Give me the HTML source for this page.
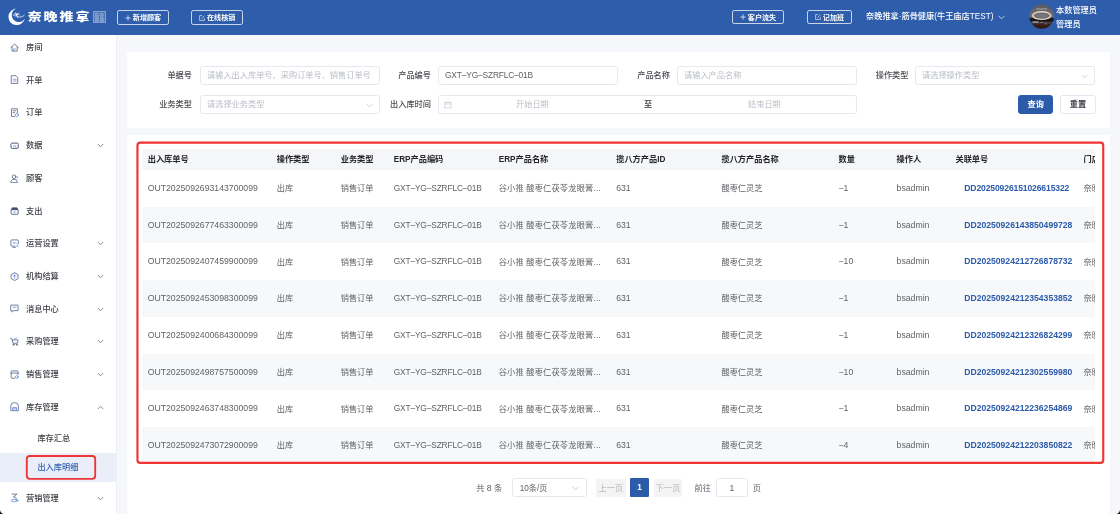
<!DOCTYPE html>
<html lang="zh-CN">
<head>
<meta charset="utf-8">
<title>出入库明细</title>
<style>
*{box-sizing:border-box;margin:0;padding:0}
html,body{width:1120px;height:514px;overflow:hidden;background:#f6f7fa}
body{position:relative;font-family:"Liberation Sans","Noto Sans CJK SC",sans-serif;font-size:8.2px;color:#606266;-webkit-font-smoothing:antialiased}
#app{position:absolute;left:0;top:0;width:1120px;height:514px;will-change:transform}
.abs{position:absolute}
/* header */
#hd{position:absolute;left:0;top:0;width:1120px;height:35px;background:#2d5dab;color:#fff}
.logo-t{position:absolute;left:27.7px;top:7.3px;font-size:14px;line-height:20px;font-weight:900;letter-spacing:1.9px;white-space:nowrap;transform:scaleY(.84);transform-origin:0 50%}
.seal{position:absolute;left:93px;top:11px;width:13px;height:12px;background:rgba(255,255,255,.17);border:.6px solid rgba(255,255,255,.3);font-size:4.6px;line-height:5.2px;color:rgba(255,255,255,.5);text-align:center;padding-top:.5px;overflow:hidden;letter-spacing:.5px}
.hbtn{position:absolute;top:10px;height:14.6px;border:1px solid rgba(255,255,255,.74);border-radius:2.2px;font-size:7.1px;line-height:14.4px;font-weight:700;text-align:center;white-space:nowrap;color:#fff}
.hbtn svg{display:inline-block;vertical-align:-0.8px;margin-right:2px}
.shop{position:absolute;left:866px;top:10px;font-size:8.2px;line-height:14px;white-space:nowrap;font-weight:500}
.uname{position:absolute;left:1056px;font-size:8.2px;line-height:11px;font-weight:500;white-space:nowrap}
/* sidebar */
#sb{position:absolute;left:0;top:35px;width:117px;height:479px;background:#fff;border-right:1px solid #eceef4}
.mi{position:absolute;left:0;width:116px;height:20px;color:#3d4046;font-weight:500;font-size:8.2px;line-height:20px;white-space:nowrap}
.mi .ic{position:absolute;left:10px;top:5.4px;width:9.2px;height:9.2px}
.mi .tx{position:absolute;left:26px;top:.7px}
.mi .ar{position:absolute;left:96.5px;top:7.5px;width:7px;height:5px}
.sub{position:absolute;left:37.4px;font-size:8.2px;line-height:22.4px;color:#3d4046;font-weight:500;white-space:nowrap}
/* cards */
.card{position:absolute;background:#fff}
.lbl{position:absolute;width:70px;text-align:right;font-size:8.2px;line-height:19px;color:#4a4d52;font-weight:500;white-space:nowrap}
.inp{position:absolute;height:19px;border:1px solid #e5e8f0;border-radius:2.5px;background:#fff;font-size:8.2px;line-height:17px;color:#b9bdc6;padding-left:6px;white-space:nowrap;overflow:hidden}
.inp.val{color:#606266}
.btn{position:absolute;top:95px;height:19px;border-radius:2.8px;font-size:8.2px;line-height:17px;text-align:center;font-weight:700}
/* table */
#tb{position:absolute;left:141.7px;top:148.8px;width:953.2px;height:314px;overflow:hidden}
.tr{position:absolute;left:0;width:953.2px;height:36.8px;line-height:37.9px;color:#606266;font-size:8.2px;white-space:nowrap}
.tr.h{top:0;height:21px;line-height:21px;background:#f5f6fa;color:#262626;font-weight:700}
.tr.s{background:#f7f8fa}
.tr span{position:absolute;top:.4px}
.tr span.en,.tr span.gx{top:0}
.tr.h span{top:.3px}
.en{font-size:8.7px}
.nm{letter-spacing:.2px}
.gx{font-size:8.4px !important;letter-spacing:-.16px}
.tr .lk.en{font-size:8.6px}
.tr .lk{color:#2c5baa;font-weight:700}
.c1{left:6px}.c2{left:135px}.c3{left:199px}.c4{left:252px}.c5{left:357px}.c6{left:474.5px}.c7{left:579.8px}.c8{left:696.8px}.c9{left:754.9px}.c10{left:813.8px}.c10.lk{left:822.6px}.c11{left:941.8px}
/* pagination */
.pg{position:absolute;top:478.3px;height:18.8px;line-height:21.6px;font-size:8.2px;color:#606266;white-space:nowrap}
.pb{top:479.1px;height:17.7px;line-height:19.8px;background:#f4f4f5;color:#b3b7be;text-align:center;border-radius:1.2px}
</style>
</head>
<body>
<div id="app">
<div id="hd">
<svg class="abs" style="left:8px;top:8px" width="18" height="18" viewBox="0 0 18 18"><path d="M8.5 .5A8.3 8.3 0 1 0 16.9 10.5A7 7 0 1 1 8.5 .5Z" fill="#fff"/><path d="M5.2 6.9Q8 7 9.6 8.3T13 8.9Q15 8.6 16.2 7.3M7.8 4.7L9.6 9.6M10.4 4.9L7.9 8.3M6.6 5.8L11.2 6.6" stroke="#fff" stroke-width=".8" fill="none" stroke-linecap="round" opacity=".92"/></svg>
<div class="logo-t">奈晚推拿</div>
<div class="seal">筋骨<br>健康</div>
<div class="hbtn" style="left:117px;width:52px"><svg width="6" height="6" viewBox="0 0 6 6"><path d="M3 .4v5.2M.4 3h5.2" stroke="#fff" stroke-width=".7"/></svg>新增顾客</div>
<div class="hbtn" style="left:191px;width:52.4px"><svg width="6" height="6" viewBox="0 0 6 6"><path d="M3 .6H.6v4.8h4.8V3M2.6 3.6L5.4.6" stroke="#fff" stroke-width=".6" fill="none"/></svg>在线核销</div>
<div class="hbtn" style="left:732px;width:52px;top:9.5px"><svg width="6" height="6" viewBox="0 0 6 6"><path d="M3 .4v5.2M.4 3h5.2" stroke="#fff" stroke-width=".7"/></svg>客户流失</div>
<div class="hbtn" style="left:807px;width:45px;top:9.5px"><svg width="6" height="6" viewBox="0 0 6 6"><path d="M3 .6H.6v4.8h4.8V3M2.6 3.6L5.4.6" stroke="#fff" stroke-width=".6" fill="none"/></svg>记加班</div>
<div class="shop">奈晚推拿·筋骨健康(牛王庙店TEST)</div>
<svg class="abs" style="left:998px;top:15px" width="7" height="5" viewBox="0 0 7 5"><path d="M.6.8L3.5 3.8 6.4.8" stroke="#dfe6f3" stroke-width=".8" fill="none"/></svg>
<svg class="abs" style="left:1029px;top:3.5px" width="26" height="26" viewBox="0 0 26 26"><defs><clipPath id="av"><circle cx="12.7" cy="12.55" r="12.2"/></clipPath><linearGradient id="avg" x1="0" y1="0" x2="0" y2="1"><stop offset="0" stop-color="#58585c"/><stop offset=".5" stop-color="#737378"/><stop offset=".56" stop-color="#1b1a1d"/><stop offset=".66" stop-color="#26242a"/><stop offset=".72" stop-color="#4a4140"/><stop offset=".8" stop-color="#3a2118"/><stop offset="1" stop-color="#2a120b"/></linearGradient></defs><g clip-path="url(#av)"><rect width="26" height="26" fill="url(#avg)"/><ellipse cx="12.7" cy="11.6" rx="8.9" ry="3.9" fill="#6b6b73" stroke="#ecd8c2" stroke-width="1.5"/><ellipse cx="12.7" cy="11.9" rx="6.2" ry="1.9" fill="#75757d"/><path d="M0 14.2Q12.7 17.6 26 14.2V17.4H0Z" fill="#17161a"/><rect x="3.4" y="17.3" width="6.2" height="1.5" fill="#aab0bd" opacity=".85"/><rect x="11" y="17.8" width="3.4" height="1" fill="#8c8f99" opacity=".7"/><rect x="16.4" y="18.6" width="1" height="1.8" fill="#b9b9c0" opacity=".7"/><rect x="7.2" y="4.1" width="11" height="1.7" fill="#c9c9cf" opacity=".38"/></g></svg>
<div class="uname" style="top:4.9px">本数管理员</div>
<div class="uname" style="top:19px">管理员</div>
</div>
<div id="sb">
<div class="abs" style="left:0;top:417.7px;width:116px;height:29px;background:#e9eef8"></div>
<div class="mi" style="top:2.4px"><svg class="ic" viewBox="0 0 10 10"><path d="M1 5L5 1.2 9 5M2.2 4.2V8.8H7.8V4.2" stroke="#45547f" stroke-width=".8" fill="none" stroke-linejoin="round" stroke-linecap="round"/><path d="M4 8.6V6.4H6" stroke="#5b86d6" stroke-width=".8" fill="none" stroke-linecap="round"/></svg><span class="tx">房间</span></div>
<div class="mi" style="top:35.1px"><svg class="ic" viewBox="0 0 10 10"><path d="M1.8 .8H6.4L8.4 2.8V9.2H1.8Z" stroke="#45547f" stroke-width=".8" fill="none" stroke-linejoin="round" stroke-linecap="round"/><path d="M3.6 4.6H6.6M3.6 6.6H6.6" stroke="#5b86d6" stroke-width=".8" fill="none" stroke-linecap="round"/></svg><span class="tx">开单</span></div>
<div class="mi" style="top:67.7px"><svg class="ic" viewBox="0 0 10 10"><path d="M8 5V.8H1.6V9.2H5" stroke="#45547f" stroke-width=".8" fill="none" stroke-linejoin="round" stroke-linecap="round"/><path d="M3.4 3H6.2M3.4 5H5" stroke="#45547f" stroke-width=".8" fill="none" stroke-linejoin="round" stroke-linecap="round"/><circle cx="7.4" cy="7.6" r="1.7" stroke="#5b86d6" stroke-width=".8" fill="none" stroke-linecap="round"/></svg><span class="tx">订单</span></div>
<div class="mi" style="top:100.4px"><svg class="ic" viewBox="0 0 10 10"><rect x="1.1" y="2.3" width="7.9" height="5.7" rx="1.3" stroke="#3f4d78" stroke-width="1" fill="none"/><path d="M3.8 6.2L5 4.6 6.2 6.2" stroke="#5b86d6" stroke-width=".8" fill="none" stroke-linecap="round"/></svg><span class="tx">数据</span><svg class="ar" viewBox="0 0 7 5"><path d="M.8 1L3.5 3.8 6.2 1" stroke="#7a7f89" stroke-width=".9" fill="none"/></svg></div>
<div class="mi" style="top:133.2px"><svg class="ic" viewBox="0 0 10 10"><circle cx="4.4" cy="3" r="2" stroke="#45547f" stroke-width=".8" fill="none" stroke-linejoin="round" stroke-linecap="round"/><path d="M.9 9C.9 6.8 2.4 5.8 4.4 5.8S7.9 6.8 7.9 9Z" stroke="#45547f" stroke-width=".8" fill="none" stroke-linejoin="round" stroke-linecap="round"/><path d="M7.4 2.2C8.6 3 8.6 4.6 7.6 5.2" stroke="#5b86d6" stroke-width=".8" fill="none" stroke-linecap="round"/></svg><span class="tx">顾客</span></div>
<div class="mi" style="top:165.9px"><svg class="ic" viewBox="0 0 10 10"><path d="M1.2 4H8.8V8A1 1 0 0 1 7.8 9H2.2A1 1 0 0 1 1.2 8Z" stroke="#3f4d78" stroke-width=".9" fill="none"/><path d="M1.6 3.8L2.4 2H7.6L8.4 3.8Z" fill="#3f4d78" stroke="#3f4d78" stroke-width=".8" stroke-linejoin="round"/><path d="M4 6.5H6" stroke="#5b86d6" stroke-width="1.1" fill="none"/></svg><span class="tx">支出</span></div>
<div class="mi" style="top:198.5px"><svg class="ic" viewBox="0 0 10 10"><path d="M9 5.2V1.8A.8.8 0 0 0 8.2 1H1.8A.8.8 0 0 0 1 1.8V7A.8.8 0 0 0 1.8 7.8H5.4M3.2 9.4H6" stroke="#45547f" stroke-width=".8" fill="none" stroke-linejoin="round" stroke-linecap="round"/><path d="M3.4 3.4L4.4 5 5.6 3.6 6.8 4.8M7.4 6.6L8.8 8M8.8 6.6L7.4 8" stroke="#5b86d6" stroke-width=".8" fill="none" stroke-linecap="round"/></svg><span class="tx">运营设置</span><svg class="ar" viewBox="0 0 7 5"><path d="M.8 1L3.5 3.8 6.2 1" stroke="#7a7f89" stroke-width=".9" fill="none"/></svg></div>
<div class="mi" style="top:231.2px"><svg class="ic" viewBox="0 0 10 10"><path d="M5 .8L8.8 2.8V7.2L5 9.2 1.2 7.2V2.8Z" stroke="#45547f" stroke-width=".8" fill="none" stroke-linejoin="round" stroke-linecap="round" stroke-dasharray="1.6 .8"/><path d="M5 3.2V6.8M3.6 4.6L5 3.2 6.4 4.6" stroke="#5b86d6" stroke-width=".8" fill="none" stroke-linecap="round"/></svg><span class="tx">机构结算</span><svg class="ar" viewBox="0 0 7 5"><path d="M.8 1L3.5 3.8 6.2 1" stroke="#7a7f89" stroke-width=".9" fill="none"/></svg></div>
<div class="mi" style="top:264.0px"><svg class="ic" viewBox="0 0 10 10"><path d="M1.2 1.2H8.8V7.2H4L2.2 8.8V7.2H1.2Z" stroke="#45547f" stroke-width=".8" fill="none" stroke-linejoin="round" stroke-linecap="round"/><path d="M3.4 3.6H6.6" stroke="#5b86d6" stroke-width=".8" fill="none" stroke-linecap="round"/></svg><span class="tx">消息中心</span><svg class="ar" viewBox="0 0 7 5"><path d="M.8 1L3.5 3.8 6.2 1" stroke="#7a7f89" stroke-width=".9" fill="none"/></svg></div>
<div class="mi" style="top:296.8px"><svg class="ic" viewBox="0 0 10 10"><path d="M.8 1.6H2L3.2 6.8H8L8.8 3.2H2.8" stroke="#45547f" stroke-width=".8" fill="none" stroke-linejoin="round" stroke-linecap="round"/><circle cx="3.8" cy="8.4" r=".6" stroke="#45547f" stroke-width=".8" fill="none" stroke-linejoin="round" stroke-linecap="round"/><circle cx="7.4" cy="8.4" r=".6" stroke="#45547f" stroke-width=".8" fill="none" stroke-linejoin="round" stroke-linecap="round"/><path d="M5 1.2L5.8 2.4 7.2 .8" stroke="#5b86d6" stroke-width=".8" fill="none" stroke-linecap="round"/></svg><span class="tx">采购管理</span><svg class="ar" viewBox="0 0 7 5"><path d="M.8 1L3.5 3.8 6.2 1" stroke="#7a7f89" stroke-width=".9" fill="none"/></svg></div>
<div class="mi" style="top:329.4px"><svg class="ic" viewBox="0 0 10 10"><path d="M8.8 5V1.8A.8.8 0 0 0 8 1H2A.8.8 0 0 0 1.2 1.8V8.2A.8.8 0 0 0 2 9H5M1.2 3.4H8.8" stroke="#45547f" stroke-width=".8" fill="none" stroke-linejoin="round" stroke-linecap="round"/><circle cx="7.4" cy="7.6" r="1.5" stroke="#5b86d6" stroke-width=".8" fill="none" stroke-linecap="round"/></svg><span class="tx">销售管理</span><svg class="ar" viewBox="0 0 7 5"><path d="M.8 1L3.5 3.8 6.2 1" stroke="#7a7f89" stroke-width=".9" fill="none"/></svg></div>
<div class="mi" style="top:362.1px"><svg class="ic" viewBox="0 0 10 10"><path d="M.9 9V4.2A4.1 3.6 0 0 1 9.1 4.2V9Z" stroke="#45547f" stroke-width=".8" fill="none" stroke-linejoin="round" stroke-linecap="round"/><path d="M3 8.8V6H7V8.8M3 7.4H7" stroke="#5b86d6" stroke-width=".8" fill="none" stroke-linecap="round"/></svg><span class="tx">库存管理</span><svg class="ar" viewBox="0 0 7 5"><path d="M.8 4L3.5 1.2 6.2 4" stroke="#7a7f89" stroke-width=".9" fill="none"/></svg></div>
<div class="mi" style="top:453.0px"><svg class="ic" viewBox="0 0 10 10"><path d="M2.2 1.2H7.6L3.6 4.2Q6.8 4.2 6.8 6.2V8" stroke="#45547f" stroke-width=".8" fill="none" stroke-linejoin="round" stroke-linecap="round"/><ellipse cx="5" cy="8.2" rx="3.9" ry="1.3" stroke="#5b86d6" stroke-width=".8" fill="none" stroke-linecap="round"/></svg><span class="tx">营销管理</span><svg class="ar" viewBox="0 0 7 5"><path d="M.8 1L3.5 3.8 6.2 1" stroke="#7a7f89" stroke-width=".9" fill="none"/></svg></div>
<div class="sub" style="top:392.6px">库存汇总</div>
<div class="sub" style="top:422.3px;color:#3564b3">出入库明细</div>
</div>
<div class="card" id="flt" style="left:127px;top:52px;width:982.6px;height:76px">
<div class="lbl" style="left:-5.0px;top:14.0px">单据号</div>
<div class="inp" style="left:73.0px;top:14.0px;width:180px">请输入出入库单号、采购订单号、销售订单号</div>
<div class="lbl" style="left:234.0px;top:14.0px">产品编号</div>
<div class="inp val gx" style="left:311px;top:14.0px;width:180px">GXT–YG–SZRFLC–01B</div>
<div class="lbl" style="left:473.0px;top:14.0px">产品名称</div>
<div class="inp" style="left:550.0px;top:14.0px;width:180px">请输入产品名称</div>
<div class="lbl" style="left:711.5px;top:14.0px">操作类型</div>
<div class="inp" style="left:788px;top:14.0px;width:180px">请选择操作类型<svg class="abs" style="right:6.5px;top:6.5px" width="7" height="5" viewBox="0 0 7 5"><path d="M.6.9L3.5 3.9 6.4.9" stroke="#c0c4cc" stroke-width=".75" fill="none"/></svg></div>
<div class="lbl" style="left:-5.0px;top:43.0px">业务类型</div>
<div class="inp" style="left:73.0px;top:43.0px;width:180px">请选择业务类型<svg class="abs" style="right:6.5px;top:6.5px" width="7" height="5" viewBox="0 0 7 5"><path d="M.6.9L3.5 3.9 6.4.9" stroke="#c0c4cc" stroke-width=".75" fill="none"/></svg></div>
<div class="lbl" style="left:234.0px;top:43.0px">出入库时间</div>
<div class="inp" style="left:311px;top:43.0px;width:419px;padding:0"><svg class="abs" style="left:5px;top:5.2px" width="8" height="8" viewBox="0 0 8 8"><path d="M.7 1.5H7.1V6.9H.7ZM.7 3H7.1M2.4.6V2M5.4.6V2" stroke="#c6c9d0" stroke-width=".7" fill="none"/></svg><span class="abs" style="left:77px;top:0">开始日期</span><span class="abs" style="left:205px;top:0;color:#303133;font-weight:500">至</span><span class="abs" style="left:309px;top:0">结束日期</span></div>
<div class="btn" style="left:891px;top:43.3px;width:35.3px;background:#2c5baa;color:#fff;border:1px solid #2c5baa">查询</div>
<div class="btn" style="left:933.2px;top:43.3px;width:35.7px;background:#fff;color:#3f4247;border:1px solid #e3e7f1">重置</div>
</div>
<div class="card" id="tc" style="left:127px;top:134.5px;width:982.6px;height:380px"></div>
<div id="tb">
<div class="tr h"><span class="c1">出入库单号</span><span class="c2">操作类型</span><span class="c3">业务类型</span><span class="c4">ERP产品编码</span><span class="c5">ERP产品名称</span><span class="c6">揽八方产品ID</span><span class="c7">揽八方产品名称</span><span class="c8">数量</span><span class="c9">操作人</span><span class="c10">关联单号</span><span class="c11">门店</span></div>
<div class="tr" style="top:21.00px"><span class="c1 en">OUT2025092693143700099</span><span class="c2">出库</span><span class="c3">销售订单</span><span class="c4 gx">GXT–YG–SZRFLC–01B</span><span class="c5 nm">谷小推 酸枣仁茯苓龙眼膏...</span><span class="c6 en">631</span><span class="c7">酸枣仁灵芝</span><span class="c8 en">−1</span><span class="c9 en">bsadmin</span><span class="c10 lk en" style="letter-spacing:-.14px">DD20250926151026615322</span><span class="c11">奈晚推拿</span></div>
<div class="tr s" style="top:57.75px"><span class="c1 en">OUT2025092677463300099</span><span class="c2">出库</span><span class="c3">销售订单</span><span class="c4 gx">GXT–YG–SZRFLC–01B</span><span class="c5 nm">谷小推 酸枣仁茯苓龙眼膏...</span><span class="c6 en">631</span><span class="c7">酸枣仁灵芝</span><span class="c8 en">−1</span><span class="c9 en">bsadmin</span><span class="c10 lk en">DD20250926143850499728</span><span class="c11">奈晚推拿</span></div>
<div class="tr" style="top:94.50px"><span class="c1 en">OUT2025092407459900099</span><span class="c2">出库</span><span class="c3">销售订单</span><span class="c4 gx">GXT–YG–SZRFLC–01B</span><span class="c5 nm">谷小推 酸枣仁茯苓龙眼膏...</span><span class="c6 en">631</span><span class="c7">酸枣仁灵芝</span><span class="c8 en">−10</span><span class="c9 en">bsadmin</span><span class="c10 lk en">DD20250924212726878732</span><span class="c11">奈晚推拿</span></div>
<div class="tr s" style="top:131.25px"><span class="c1 en">OUT2025092453098300099</span><span class="c2">出库</span><span class="c3">销售订单</span><span class="c4 gx">GXT–YG–SZRFLC–01B</span><span class="c5 nm">谷小推 酸枣仁茯苓龙眼膏...</span><span class="c6 en">631</span><span class="c7">酸枣仁灵芝</span><span class="c8 en">−1</span><span class="c9 en">bsadmin</span><span class="c10 lk en">DD20250924212354353852</span><span class="c11">奈晚推拿</span></div>
<div class="tr" style="top:168.00px"><span class="c1 en">OUT2025092400684300099</span><span class="c2">出库</span><span class="c3">销售订单</span><span class="c4 gx">GXT–YG–SZRFLC–01B</span><span class="c5 nm">谷小推 酸枣仁茯苓龙眼膏...</span><span class="c6 en">631</span><span class="c7">酸枣仁灵芝</span><span class="c8 en">−1</span><span class="c9 en">bsadmin</span><span class="c10 lk en">DD20250924212326824299</span><span class="c11">奈晚推拿</span></div>
<div class="tr s" style="top:204.75px"><span class="c1 en">OUT2025092498757500099</span><span class="c2">出库</span><span class="c3">销售订单</span><span class="c4 gx">GXT–YG–SZRFLC–01B</span><span class="c5 nm">谷小推 酸枣仁茯苓龙眼膏...</span><span class="c6 en">631</span><span class="c7">酸枣仁灵芝</span><span class="c8 en">−10</span><span class="c9 en">bsadmin</span><span class="c10 lk en">DD20250924212302559980</span><span class="c11">奈晚推拿</span></div>
<div class="tr" style="top:241.50px"><span class="c1 en">OUT2025092463748300099</span><span class="c2">出库</span><span class="c3">销售订单</span><span class="c4 gx">GXT–YG–SZRFLC–01B</span><span class="c5 nm">谷小推 酸枣仁茯苓龙眼膏...</span><span class="c6 en">631</span><span class="c7">酸枣仁灵芝</span><span class="c8 en">−1</span><span class="c9 en">bsadmin</span><span class="c10 lk en">DD20250924212236254869</span><span class="c11">奈晚推拿</span></div>
<div class="tr s" style="top:278.25px"><span class="c1 en">OUT2025092473072900099</span><span class="c2">出库</span><span class="c3">销售订单</span><span class="c4 gx">GXT–YG–SZRFLC–01B</span><span class="c5 nm">谷小推 酸枣仁茯苓龙眼膏...</span><span class="c6 en">631</span><span class="c7">酸枣仁灵芝</span><span class="c8 en">−4</span><span class="c9 en">bsadmin</span><span class="c10 lk en">DD20250924212203850822</span><span class="c11">奈晚推拿</span></div>
</div>
<div class="pg" style="left:476.3px">共 <span style="font-size:8.8px">8</span> 条</div>
<div class="inp val" style="left:512.2px;top:478.3px;width:74.8px;height:18.8px;line-height:19.2px;padding-left:6.5px">10条/页<svg class="abs" style="right:7px;top:6.8px" width="7" height="5" viewBox="0 0 7 5"><path d="M.6.9L3.5 3.9 6.4.9" stroke="#b4b8c0" stroke-width=".75" fill="none"/></svg></div>
<div class="pg pb" style="left:596.2px;width:29.4px">上一页</div>
<div class="pg pb" style="left:630.2px;width:18.5px;top:478.3px;height:18.8px;line-height:19.6px;background:#2c5baa;color:#fff;font-weight:700">1</div>
<div class="pg pb" style="left:653.8px;width:28.6px">下一页</div>
<div class="pg" style="left:694.6px">前往</div>
<div class="inp val" style="left:715.7px;top:478.3px;width:32.6px;height:18.8px;line-height:18.6px;padding:0;text-align:center;font-size:8.6px">1</div>
<div class="pg" style="left:752.8px">页</div>
<svg class="abs" style="left:0;top:0" width="1120" height="514" viewBox="0 0 1120 514"><rect x="137.45" y="142.6" width="965.8" height="320.3" rx="2.8" fill="none" stroke="#f03333" stroke-width="2.15"/><rect x="26.8" y="456" width="68.4" height="22.8" rx="3" fill="none" stroke="#f03333" stroke-width="1.85"/><path d="M0 514V509.8A4.2 4.2 0 0 0 4.2 514Z" fill="#111"/><path d="M1120 514V509.8A4.2 4.2 0 0 1 1115.8 514Z" fill="#111"/></svg>
</div>
</body>
</html>
